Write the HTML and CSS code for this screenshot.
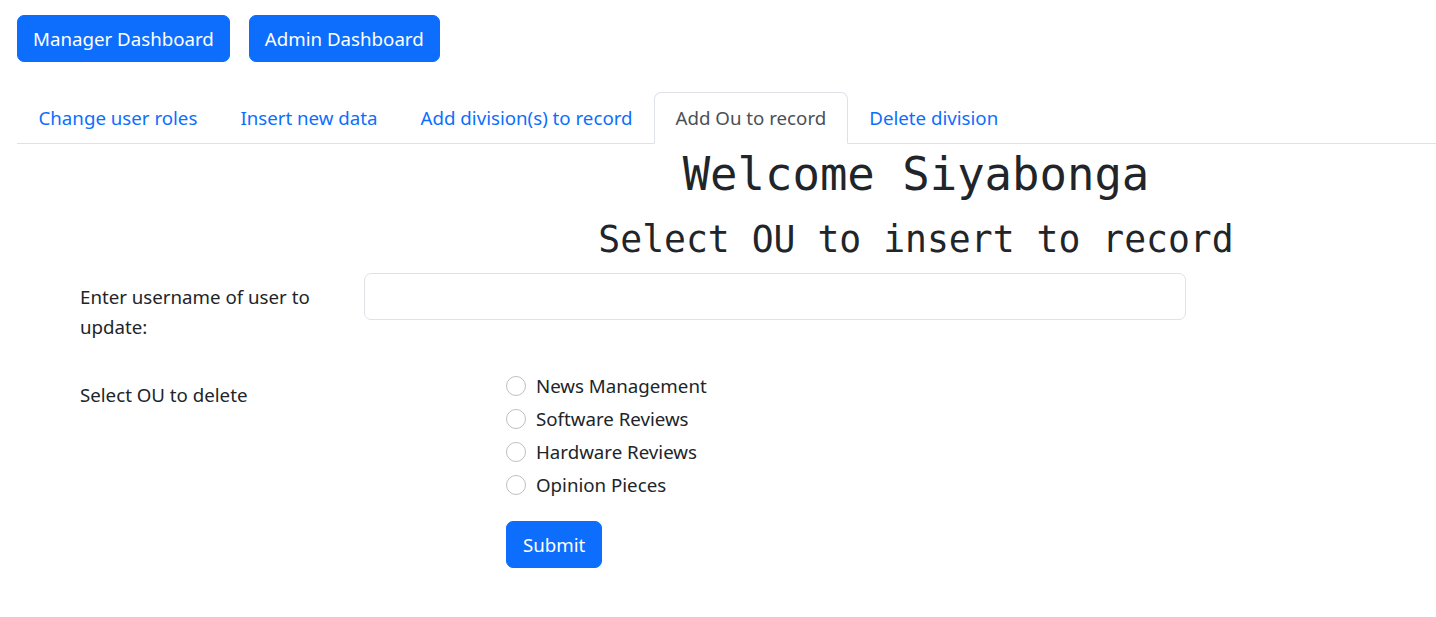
FILE: index.html
```html
<!DOCTYPE html>
<html lang="en">
<head>
<meta charset="utf-8">
<title>Add Ou to record</title>
<link rel="stylesheet" href="styles.css">
</head>
<body>
  <div class="top-buttons">
    <button class="btn">Manager Dashboard</button>
    <button class="btn">Admin Dashboard</button>
  </div>

  <nav class="tabs">
    <a class="tab">Change user roles</a>
    <a class="tab">Insert new data</a>
    <a class="tab">Add division(s) to record</a>
    <a class="tab active">Add Ou to record</a>
    <a class="tab">Delete division</a>
  </nav>

  <div class="headings">
    <h1 class="title">Welcome Siyabonga</h1>
    <h2 class="subtitle">Select OU to insert to record</h2>
  </div>

  <form class="form">
    <div class="row row-user">
      <label class="form-label" for="username">Enter username of user to update:</label>
      <input class="form-input" id="username" type="text">
    </div>
    <div class="row row-ou">
      <span class="form-label">Select OU to delete</span>
      <div class="radios">
        <label class="radio"><span class="radio-dot"></span>News Management</label>
        <label class="radio"><span class="radio-dot"></span>Software Reviews</label>
        <label class="radio"><span class="radio-dot"></span>Hardware Reviews</label>
        <label class="radio"><span class="radio-dot"></span>Opinion Pieces</label>
        <button class="btn btn-submit" type="button">Submit</button>
      </div>
    </div>
  </form>
</body>
</html>
```

FILE: styles.css
```css
* { box-sizing: border-box; }

body {
  margin: 0;
  padding: 15px 0 0 17px;
  font-family: "Noto Sans", "Open Sans", sans-serif;
  font-size: 18.7px;
  line-height: 30px;
  color: #212529;
  background: #fff;
}

.top-buttons {
  display: flex;
  gap: 19px;
}

.btn {
  height: 47px;
  padding: 0 15px;
  border: 1px solid #0d6efd;
  border-radius: 7px;
  background: #0d6efd;
  color: #fff;
  font: inherit;
  line-height: 30px;
  cursor: pointer;
}

.tabs {
  display: flex;
  margin-top: 30px;
  border-bottom: 1px solid #dee2e6;
}

.tab {
  display: block;
  padding: 10px 20.5px;
  border: 1px solid transparent;
  border-radius: 7px 7px 0 0;
  margin-bottom: -1px;
  color: #0d6efd;
  text-decoration: none;
  cursor: pointer;
}

.tab.active {
  color: #495057;
  background: #fff;
  border-color: #dee2e6 #dee2e6 #fff;
}

.headings {
  margin-left: 379px;
  text-align: center;
}

.title, .subtitle {
  font-family: "DejaVu Sans Mono", monospace;
  font-weight: 400;
  line-height: 1.2;
  color: #212529;
}

.title {
  font-size: 45.6px;
  margin: 4px 0 15px;
}

.subtitle {
  font-size: 36.4px;
  margin: 0;
}

.form {
  margin-top: 12px;
  padding-left: 63px;
}

.row {
  display: grid;
  margin-bottom: 21px;
}

.row-user {
  grid-template-columns: 260px 822px;
  column-gap: 24px;
  align-items: start;
}

.row-ou {
  grid-template-columns: 426px 1fr;
}

.form-label {
  display: block;
  padding: 8.5px 0;
}

.form-input {
  height: 47px;
  width: 100%;
  border: 1px solid #dee2e6;
  border-radius: 7px;
  background: #fff;
  font: inherit;
  padding: 7px 15px;
}

.radios {
  display: flex;
  flex-direction: column;
  align-items: flex-start;
}

.radio {
  display: flex;
  align-items: center;
  gap: 10px;
  margin-bottom: 3px;
  line-height: 30px;
}

.radio-dot {
  width: 20px;
  height: 20px;
  border: 1px solid #bfbfbf;
  border-radius: 50%;
  background: #fff;
  flex: none;
}

.btn-submit {
  margin-top: 18px;
  padding: 0 16px;
}
```
